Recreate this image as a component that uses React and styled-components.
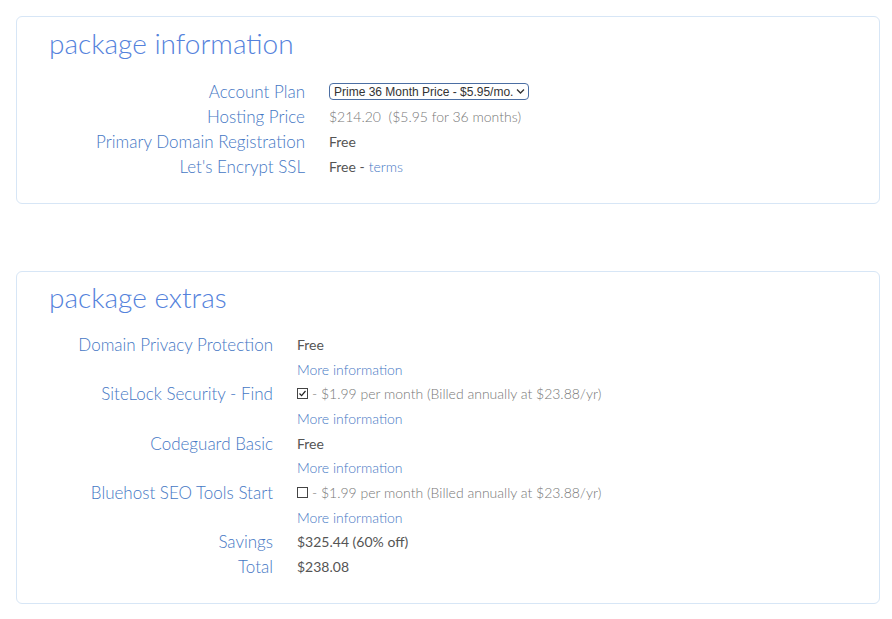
import React from 'react'
import styled, { createGlobalStyle } from 'styled-components'

const GlobalStyle = createGlobalStyle`
  body {
    margin: 0;
    background: #fff;
    font-family: Lato, "Open Sans", sans-serif;
  }
`

const Page = styled.div`
  display: flex;
  flex-direction: column;
  gap: 67px;
  padding: 16px 12px 16px 16px;
`

const Card = styled.section`
  border: 1px solid #d7e6f6;
  border-radius: 6px;
  padding: ${p => p.$pad};
`

const Title = styled.h2`
  margin: 0 0 ${p => p.$gap || 17}px;
  font-size: 28px;
  line-height: 36px;
  font-weight: 300;
  color: #5482dc;
`

const Rows = styled.div`
  display: grid;
  grid-template-columns: ${p => p.$label}px 1fr;
  column-gap: ${p => p.$gap}px;
  grid-auto-rows: ${p => p.$row}px;
  align-items: center;
`

const Label = styled.div`
  text-align: right;
  font-size: 17px;
  font-weight: 300;
  color: #4577c4;
  white-space: nowrap;
`

const Value = styled.div`
  font-size: 14px;
  color: ${p => (p.$light ? '#777' : '#555')};
  font-weight: ${p => (p.$light ? 300 : 400)};
  white-space: nowrap;
  display: flex;
  align-items: center;
  gap: 4px;
`

const Link = styled.a`
  color: #4577c4;
  font-weight: 300;
  text-decoration: none;
  cursor: pointer;
`

const SelectWrap = styled.span`
  position: relative;
  display: inline-flex;
`

const Select = styled.select`
  appearance: none;
  font-family: "Liberation Sans", Arial, sans-serif;
  font-size: 12px;
  color: #333;
  height: 17px;
  width: 200px;
  padding: 0 14px 0 4px;
  border: 1px solid #4b6ea3;
  border-radius: 4px;
  background: #fff;
`

const Chevron = styled.svg`
  position: absolute;
  right: 4px;
  top: 5px;
  pointer-events: none;
`

const Box = styled.span`
  display: inline-flex;
  align-items: center;
  justify-content: center;
  width: 9px;
  height: 9px;
  border: 1px solid #444;
  background: #fff;
`

const Check = ({ checked }) => (
  <Box>
    {checked && (
      <svg width="9" height="9" viewBox="0 0 9 9">
        <path d="M1.5 4.5 L3.6 6.6 L7.5 2" fill="none" stroke="#222" strokeWidth="1.2" />
      </svg>
    )}
  </Box>
)

const Extra = ({ checked }) => (
  <Value $light>
    <Check checked={checked} />
    <span>- $1.99 per month (Billed annually at $23.88/yr)</span>
  </Value>
)

const MoreInfo = () => (
  <>
    <span />
    <Value>
      <Link>More information</Link>
    </Value>
  </>
)

export default function App() {
  return (
    <>
      <GlobalStyle />
      <Page>
        <Card $pad="8px 32px 24px">
          <Title $gap={18}>package information</Title>
          <Rows $label={256} $gap={24} $row={25}>
            <Label>Account Plan</Label>
            <Value>
              <SelectWrap>
                <Select defaultValue="36">
                  <option value="36">Prime 36 Month Price - $5.95/mo.</option>
                  <option value="24">Prime 24 Month Price</option>
                  <option value="12">Prime 12 Month Price</option>
                </Select>
                <Chevron width="9" height="7" viewBox="0 0 9 7">
                  <path d="M1 1.5 L4.5 5 L8 1.5" fill="none" stroke="#333" strokeWidth="1.3" />
                </Chevron>
              </SelectWrap>
            </Value>
            <Label>Hosting Price</Label>
            <Value $light>$214.20&nbsp; ($5.95 for 36 months)</Value>
            <Label>Primary Domain Registration</Label>
            <Value>Free</Value>
            <Label>Let's Encrypt SSL</Label>
            <Value>
              <span>Free -</span>
              <Link>terms</Link>
            </Value>
          </Rows>
        </Card>

        <Card $pad="7px 32px 24px">
          <Title>package extras</Title>
          <Rows $label={224} $gap={24} $row={24.7}>
            <Label>Domain Privacy Protection</Label>
            <Value>Free</Value>
            <MoreInfo />
            <Label>SiteLock Security - Find</Label>
            <Extra checked />
            <MoreInfo />
            <Label>Codeguard Basic</Label>
            <Value>Free</Value>
            <MoreInfo />
            <Label>Bluehost SEO Tools Start</Label>
            <Extra />
            <MoreInfo />
            <Label>Savings</Label>
            <Value>$325.44 (60% off)</Value>
            <Label>Total</Label>
            <Value>$238.08</Value>
          </Rows>
        </Card>
      </Page>
    </>
  )
}
